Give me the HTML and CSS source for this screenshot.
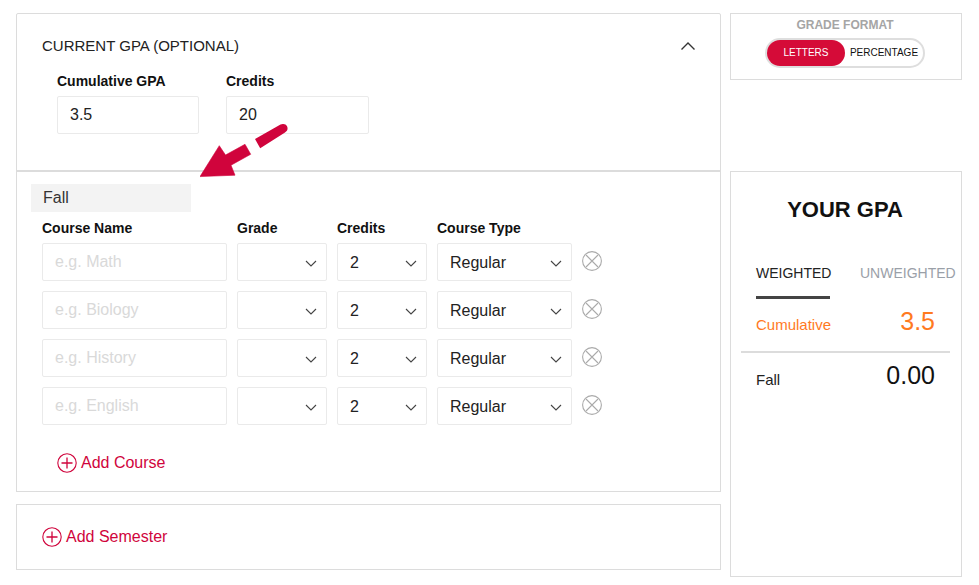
FILE: index.html
```html
<!DOCTYPE html>
<html lang="en">
<head>
<meta charset="utf-8">
<title>GPA Calculator</title>
<link rel="stylesheet" href="styles.css">
</head>
<body>
<div class="page">
  <main class="main">
    <section class="panel current">
      <div class="current-head">
        <h2>CURRENT GPA (OPTIONAL)</h2>
        <svg class="caret" width="16" height="10" viewBox="0 0 16 10"><path d="M1.5 8.5 8 2l6.5 6.5" fill="none" stroke="#333" stroke-width="1.4"/></svg>
      </div>
      <div class="current-fields">
        <label class="field"><span class="lbl">Cumulative GPA</span><span class="box gpa-box">3.5</span></label>
        <label class="field"><span class="lbl">Credits</span><span class="box credit-box">20</span></label>
      </div>
    </section>
    <section class="panel semester">
      <div class="sem-name">Fall</div>
      <div class="row head">
        <span class="lbl c-name">Course Name</span>
        <span class="lbl c-grade">Grade</span>
        <span class="lbl c-credits">Credits</span>
        <span class="lbl c-type">Course Type</span>
      </div>
      <div class="row">
        <span class="box c-name ph">e.g. Math</span>
        <span class="box c-grade sel"><svg class="chev" width="12" height="7" viewBox="0 0 12 7"><path d="M1 1l5 5 5-5" fill="none" stroke="#444" stroke-width="1.1"/></svg></span>
        <span class="box c-credits sel">2<svg class="chev" width="12" height="7" viewBox="0 0 12 7"><path d="M1 1l5 5 5-5" fill="none" stroke="#444" stroke-width="1.1"/></svg></span>
        <span class="box c-type sel">Regular<svg class="chev" width="12" height="7" viewBox="0 0 12 7"><path d="M1 1l5 5 5-5" fill="none" stroke="#444" stroke-width="1.1"/></svg></span>
        <svg class="remove" width="20" height="20" viewBox="0 0 20 20"><circle cx="10" cy="10" r="9.4" fill="none" stroke="#aaa" stroke-width="1.1"/><path d="M4 4l12 12M16 4 4 16" stroke="#aaa" stroke-width="1.1"/></svg>
      </div>
      <div class="row">
        <span class="box c-name ph">e.g. Biology</span>
        <span class="box c-grade sel"><svg class="chev" width="12" height="7" viewBox="0 0 12 7"><path d="M1 1l5 5 5-5" fill="none" stroke="#444" stroke-width="1.1"/></svg></span>
        <span class="box c-credits sel">2<svg class="chev" width="12" height="7" viewBox="0 0 12 7"><path d="M1 1l5 5 5-5" fill="none" stroke="#444" stroke-width="1.1"/></svg></span>
        <span class="box c-type sel">Regular<svg class="chev" width="12" height="7" viewBox="0 0 12 7"><path d="M1 1l5 5 5-5" fill="none" stroke="#444" stroke-width="1.1"/></svg></span>
        <svg class="remove" width="20" height="20" viewBox="0 0 20 20"><circle cx="10" cy="10" r="9.4" fill="none" stroke="#aaa" stroke-width="1.1"/><path d="M4 4l12 12M16 4 4 16" stroke="#aaa" stroke-width="1.1"/></svg>
      </div>
      <div class="row">
        <span class="box c-name ph">e.g. History</span>
        <span class="box c-grade sel"><svg class="chev" width="12" height="7" viewBox="0 0 12 7"><path d="M1 1l5 5 5-5" fill="none" stroke="#444" stroke-width="1.1"/></svg></span>
        <span class="box c-credits sel">2<svg class="chev" width="12" height="7" viewBox="0 0 12 7"><path d="M1 1l5 5 5-5" fill="none" stroke="#444" stroke-width="1.1"/></svg></span>
        <span class="box c-type sel">Regular<svg class="chev" width="12" height="7" viewBox="0 0 12 7"><path d="M1 1l5 5 5-5" fill="none" stroke="#444" stroke-width="1.1"/></svg></span>
        <svg class="remove" width="20" height="20" viewBox="0 0 20 20"><circle cx="10" cy="10" r="9.4" fill="none" stroke="#aaa" stroke-width="1.1"/><path d="M4 4l12 12M16 4 4 16" stroke="#aaa" stroke-width="1.1"/></svg>
      </div>
      <div class="row">
        <span class="box c-name ph">e.g. English</span>
        <span class="box c-grade sel"><svg class="chev" width="12" height="7" viewBox="0 0 12 7"><path d="M1 1l5 5 5-5" fill="none" stroke="#444" stroke-width="1.1"/></svg></span>
        <span class="box c-credits sel">2<svg class="chev" width="12" height="7" viewBox="0 0 12 7"><path d="M1 1l5 5 5-5" fill="none" stroke="#444" stroke-width="1.1"/></svg></span>
        <span class="box c-type sel">Regular<svg class="chev" width="12" height="7" viewBox="0 0 12 7"><path d="M1 1l5 5 5-5" fill="none" stroke="#444" stroke-width="1.1"/></svg></span>
        <svg class="remove" width="20" height="20" viewBox="0 0 20 20"><circle cx="10" cy="10" r="9.4" fill="none" stroke="#aaa" stroke-width="1.1"/><path d="M4 4l12 12M16 4 4 16" stroke="#aaa" stroke-width="1.1"/></svg>
      </div>
      <div class="add add-course">
        <svg width="20" height="20" viewBox="0 0 20 20"><circle cx="10" cy="10" r="9.2" fill="none" stroke="#d0043c" stroke-width="1.1"/><path d="M4.5 10h11M10 4.5v11" stroke="#d0043c" stroke-width="1.3"/></svg>
        <span>Add Course</span>
      </div>
    </section>
    <section class="panel add-sem">
      <div class="add">
        <svg width="20" height="20" viewBox="0 0 20 20"><circle cx="10" cy="10" r="9.2" fill="none" stroke="#d0043c" stroke-width="1.1"/><path d="M4.5 10h11M10 4.5v11" stroke="#d0043c" stroke-width="1.3"/></svg>
        <span>Add Semester</span>
      </div>
    </section>
    <svg class="arrow" width="90" height="56" viewBox="200 124 90 56">
      <path fill="#d0043c" stroke="#d0043c" stroke-width=".6" stroke-linejoin="round" d="M200 176.6 219.3 145.7 225.5 155 245 144.3 250.7 154.3 231 165.2 235 175.2Z"/>
      <path fill="#d0043c" d="M255 139 280.5 124.6C283 123.4 285.8 124 287 126.3 288.2 128.7 287.4 131 285 132.4L260.2 148.3Z"/>
    </svg>
  </main>
  <aside class="side">
    <section class="format">
      <h3>GRADE FORMAT</h3>
      <div class="toggle"><span class="opt on">LETTERS</span><span class="opt">PERCENTAGE</span></div>
    </section>
    <section class="result">
      <h2>YOUR GPA</h2>
      <div class="tabs"><span class="tab active">WEIGHTED</span><span class="tab">UNWEIGHTED</span></div>
      <div class="line cum"><span>Cumulative</span><b>3.5</b></div>
      <div class="line fall"><span>Fall</span><b>0.00</b></div>
    </section>
  </aside>
</div>
</body>
</html>
```
FILE: styles.css
```css
* { box-sizing: border-box; }
html, body { margin: 0; height: 100%; background: #fff; overflow: hidden; }
body { font-family: "Liberation Sans", Arial, sans-serif; color: #111; font-size: 16px; }
.page { display: flex; align-items: flex-start; gap: 9px; padding: 13px 0 0 16px; }
.main { width: 705px; position: relative; flex: none; }
.panel { border: 1px solid #dcdcdc; }
.current { height: 158px; padding: 23px 24px 0 25px; border-radius: 2px 2px 0 0; }
.current-head { display: flex; justify-content: space-between; align-items: center; height: 17px; }
.current-head h2 { margin: 0; font-size: 15px; font-weight: 400; color: #222; line-height: 17px; }
.current-fields { display: flex; gap: 27px; padding: 19px 0 0 15px; }
.field { display: flex; flex-direction: column; }
.lbl { font-size: 14px; font-weight: 700; line-height: 17px; color: #111; display: block; }
.field .lbl { margin-bottom: 6px; }
.box { display: flex; align-items: center; height: 38px; border: 1px solid #eaeaea; border-radius: 2px; padding-left: 12px; font-size: 16px; color: #222; position: relative; background: #fff; }
.gpa-box { width: 142px; }
.credit-box { width: 143px; }
.semester { height: 322px; margin-top: -1px; border-top-width: 2px; padding: 12px 0 0 14px; position: relative; }
.sem-name { width: 160px; height: 28px; background: #f3f3f3; font-size: 16px; color: #333; line-height: 27px; padding-left: 12px; }
.row { display: flex; align-items: center; gap: 10px; margin: 10px 0 0 11px; height: 38px; }
.row.head { height: 17px; margin-top: 8px; margin-bottom: -4px; }
.row .c-name { width: 185px; flex: none; }
.c-grade { width: 90px; flex: none; }
.c-credits { width: 90px; flex: none; }
.c-type { width: 135px; flex: none; }
.ph { color: #d9d9d9; }
.sel { padding-top: 2px; }
.chev { position: absolute; right: 9px; top: 16px; }
.remove { flex: none; margin-top: -3px; }
.add { display: flex; align-items: center; gap: 4px; color: #d0043c; font-size: 16px; line-height: 20px; }
.add-course { margin: 28px 0 0 26px; }
.add-sem { height: 66px; margin-top: 12px; padding: 22px 0 0 25px; }
.arrow { position: absolute; left: 184px; top: 111px; }
.side { width: 232px; flex: none; }
.format { height: 67px; border: 1px solid #dcdcdc; text-align: center; padding-top: 4px; }
.format h3 { margin: 0 2px 0 0; font-size: 12px; line-height: 14px; font-weight: 700; color: #a5a5a5; }
.toggle { display: flex; width: 160px; height: 30px; margin: 6px 0 0 34px; border: 2px solid #dedede; border-radius: 15px; }
.opt { font-size: 10px; line-height: 26px; color: #111; flex: 1; text-align: center; }
.opt.on { flex: none; width: 78px; height: 26px; background: #d50b38; color: #fff; border-radius: 13px; }
.result { height: 406px; margin-top: 91px; border: 1px solid #dcdcdc; position: relative; }
.result h2 { margin: 0 2px 0 0; text-align: center; font-size: 22px; line-height: 26px; font-weight: 700; padding-top: 25px; height: 51px; box-sizing: content-box; color: #111; }
.tabs { display: flex; gap: 30px; padding-left: 25px; margin-top: 17px; }
.tab { font-size: 14px; line-height: 17px; color: #9aa0a8; height: 34px; white-space: nowrap; flex: none; }
.tab.active { color: #222; border-bottom: 3px solid #444; width: 74px; }
.line { display: flex; justify-content: space-between; align-items: center; margin: 0 11px 0 10px; padding: 0 15px 0 15px; font-size: 15px; }
.line b { font-weight: 400; font-size: 25px; }
.cum { color: #ff7a1f; height: 54px; border-bottom: 2px solid #dcdcdc; }
.cum span { margin-bottom: 2px; }
.cum b { margin-bottom: 8px; }
.fall { height: 48px; color: #222; }
.fall span { padding-top: 4px; }
.fall b { color: #111; margin-bottom: 4px; }
```
